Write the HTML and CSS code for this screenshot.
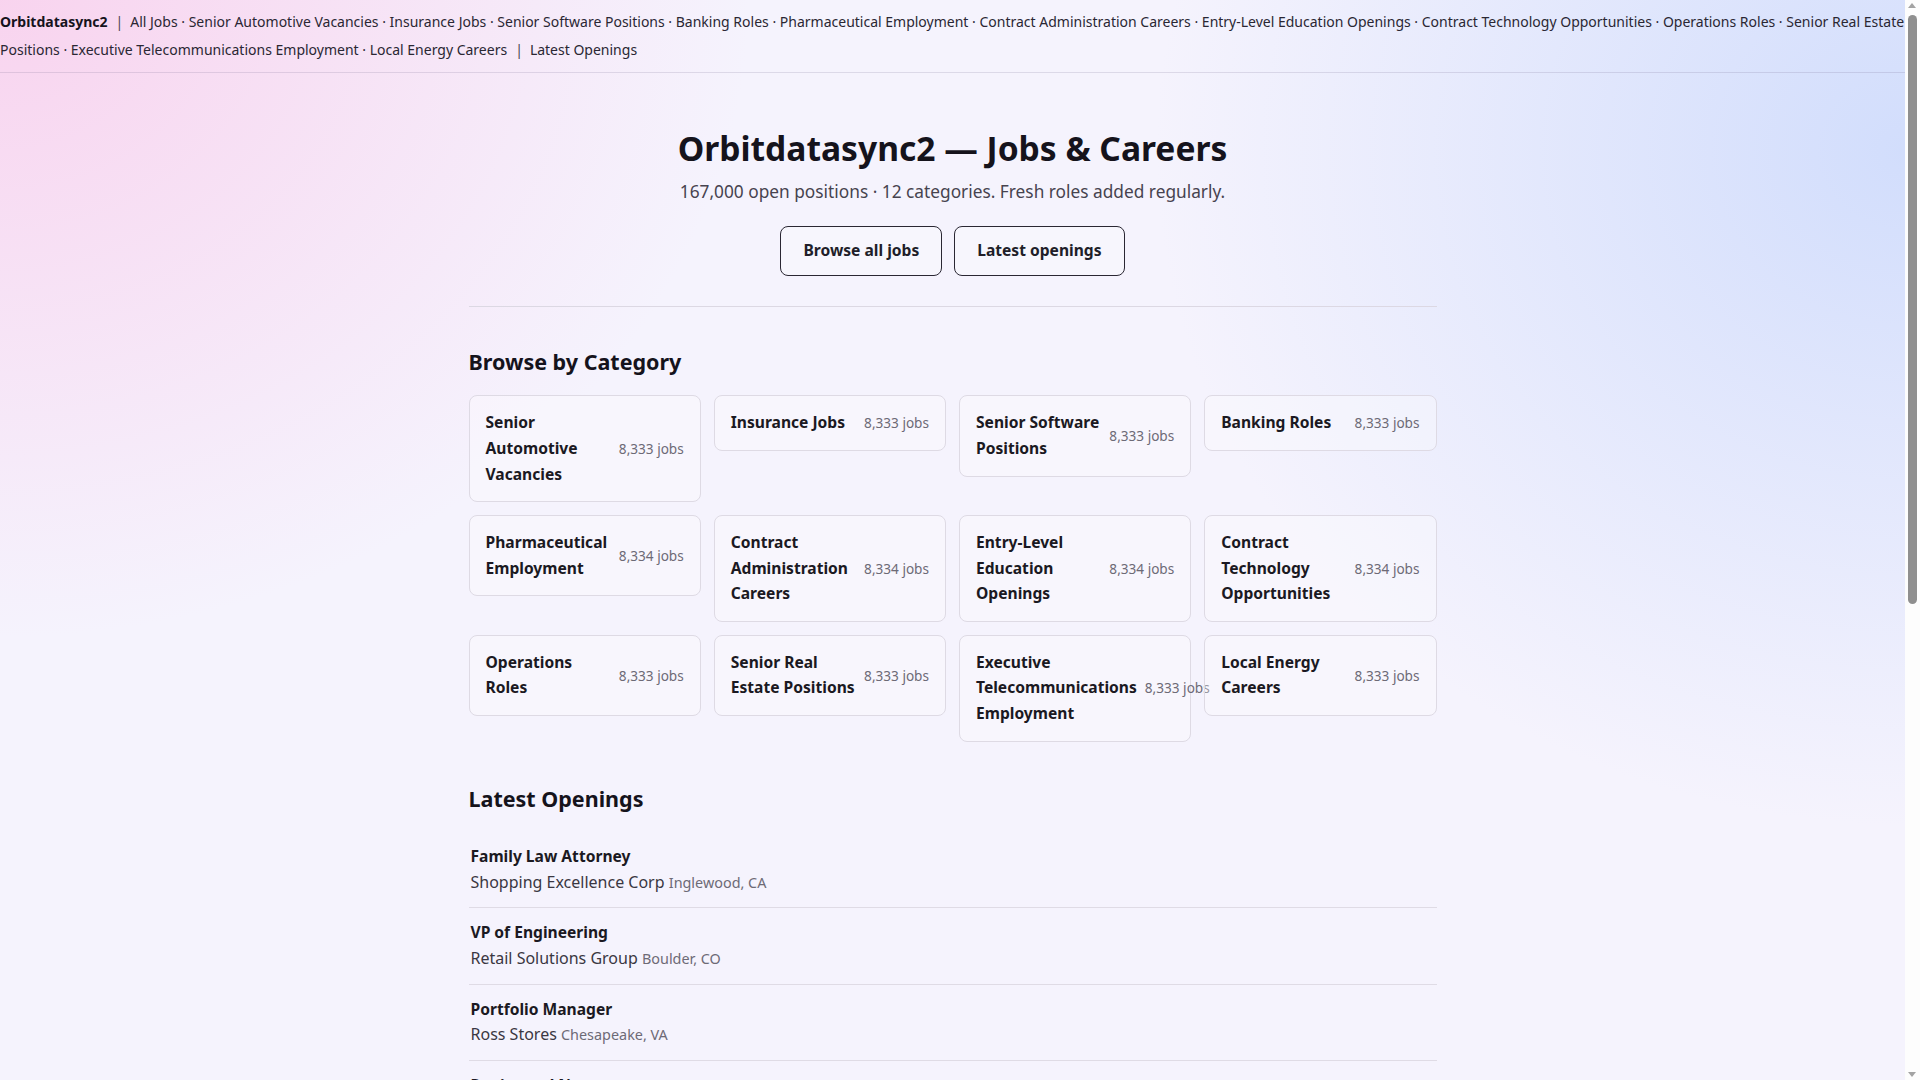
FILE: index.html
```html
<!DOCTYPE html>
<html lang="en">
<head>
<meta charset="utf-8">
<title>Orbitdatasync2 — Jobs &amp; Careers</title>
<link rel="stylesheet" href="styles.css">
</head>
<body>
<header class="topbar">
  <a class="brand" href="#">Orbitdatasync2</a><span class="bar">|</span><a href="#">All Jobs</a> · <a href="#">Senior Automotive Vacancies</a> · <a href="#">Insurance Jobs</a> · <a href="#">Senior Software Positions</a> · <a href="#">Banking Roles</a> · <a href="#">Pharmaceutical Employment</a> · <a href="#">Contract Administration Careers</a> · <a href="#">Entry-Level Education Openings</a> · <a href="#">Contract Technology Opportunities</a> · <a href="#">Operations Roles</a> · <a href="#">Senior Real Estate Positions</a> · <a href="#">Executive Telecommunications Employment</a> · <a href="#">Local Energy Careers</a><span class="bar">|</span><a href="#">Latest Openings</a>
</header>

<main class="wrap">
  <section class="hero">
    <h1>Orbitdatasync2 — Jobs &amp; Careers</h1>
    <p class="lead">167,000 open positions · 12 categories. Fresh roles added regularly.</p>
    <div class="actions">
      <a class="btn" href="#">Browse all jobs</a>
      <a class="btn" href="#">Latest openings</a>
    </div>
  </section>

  <section class="section">
    <h2>Browse by Category</h2>
    <div class="cats">
      <a class="cat" href="#"><span class="cat-name">Senior Automotive Vacancies</span><span class="cat-count">8,333 jobs</span></a>
      <a class="cat" href="#"><span class="cat-name">Insurance Jobs</span><span class="cat-count">8,333 jobs</span></a>
      <a class="cat" href="#"><span class="cat-name">Senior Software Positions</span><span class="cat-count">8,333 jobs</span></a>
      <a class="cat" href="#"><span class="cat-name">Banking Roles</span><span class="cat-count">8,333 jobs</span></a>
      <a class="cat" href="#"><span class="cat-name">Pharmaceutical Employment</span><span class="cat-count">8,334 jobs</span></a>
      <a class="cat" href="#"><span class="cat-name">Contract Administration Careers</span><span class="cat-count">8,334 jobs</span></a>
      <a class="cat" href="#"><span class="cat-name">Entry-Level Education Openings</span><span class="cat-count">8,334 jobs</span></a>
      <a class="cat" href="#"><span class="cat-name">Contract Technology Opportunities</span><span class="cat-count">8,334 jobs</span></a>
      <a class="cat" href="#"><span class="cat-name">Operations Roles</span><span class="cat-count">8,333 jobs</span></a>
      <a class="cat" href="#"><span class="cat-name">Senior Real Estate Positions</span><span class="cat-count">8,333 jobs</span></a>
      <a class="cat" href="#"><span class="cat-name">Executive Telecommunications Employment</span><span class="cat-count">8,333 jobs</span></a>
      <a class="cat" href="#"><span class="cat-name">Local Energy Careers</span><span class="cat-count">8,333 jobs</span></a>
    </div>
  </section>

  <section class="section latest">
    <h2>Latest Openings</h2>
    <ul class="jobs">
      <li class="job"><a class="job-title" href="#">Family Law Attorney</a><div class="job-meta"><span class="company">Shopping Excellence Corp</span> <span class="loc">Inglewood, CA</span></div></li>
      <li class="job"><a class="job-title" href="#">VP of Engineering</a><div class="job-meta"><span class="company">Retail Solutions Group</span> <span class="loc">Boulder, CO</span></div></li>
      <li class="job"><a class="job-title" href="#">Portfolio Manager</a><div class="job-meta"><span class="company">Ross Stores</span> <span class="loc">Chesapeake, VA</span></div></li>
      <li class="job"><a class="job-title" href="#">Registered Nurse</a><div class="job-meta"><span class="company">Summit Health Partners</span> <span class="loc">Tulsa, OK</span></div></li>
      <li class="job"><a class="job-title" href="#">Data Analyst</a><div class="job-meta"><span class="company">Northwind Analytics</span> <span class="loc">Raleigh, NC</span></div></li>
      <li class="job"><a class="job-title" href="#">Claims Adjuster</a><div class="job-meta"><span class="company">Harbor Mutual Insurance</span> <span class="loc">Tampa, FL</span></div></li>
      <li class="job"><a class="job-title" href="#">Senior Software Engineer</a><div class="job-meta"><span class="company">Cloudline Systems</span> <span class="loc">Austin, TX</span></div></li>
      <li class="job"><a class="job-title" href="#">Branch Manager</a><div class="job-meta"><span class="company">First Federal Bank</span> <span class="loc">Columbus, OH</span></div></li>
      <li class="job"><a class="job-title" href="#">Operations Coordinator</a><div class="job-meta"><span class="company">Evergreen Logistics</span> <span class="loc">Reno, NV</span></div></li>
      <li class="job"><a class="job-title" href="#">Elementary School Teacher</a><div class="job-meta"><span class="company">Bright Path Academy</span> <span class="loc">Mesa, AZ</span></div></li>
      <li class="job"><a class="job-title" href="#">Network Technician</a><div class="job-meta"><span class="company">Metro Telecom</span> <span class="loc">Omaha, NE</span></div></li>
      <li class="job"><a class="job-title" href="#">Energy Consultant</a><div class="job-meta"><span class="company">Solaris Power Co</span> <span class="loc">Fresno, CA</span></div></li>
    </ul>
  </section>

  <footer class="foot">© 2025 Orbitdatasync2 · All rights reserved</footer>
</main>

<div class="scrollbar" aria-hidden="true">
  <span class="sb-up"></span>
  <span class="sb-thumb"></span>
  <span class="sb-down"></span>
</div>
</body>
</html>
```

FILE: styles.css
```css
html {
  background-color: #f5f3fd;
}

body {
  margin: 0 15px 0 0;
  font-family: "Noto Sans", "Open Sans", sans-serif;
  font-size: 16px;
  line-height: 1.6;
  color: #17151f;
  background:
    radial-gradient(ellipse 1000px 850px at 0% 0%, rgba(249, 206, 236, 0.85), rgba(249, 206, 236, 0) 75%),
    radial-gradient(ellipse 1000px 900px at 100% 8%, rgba(206, 219, 252, 0.9), rgba(206, 219, 252, 0) 75%),
    #f5f3fd;
  background-repeat: no-repeat;
}

a {
  color: inherit;
  text-decoration: none;
}

/* top bar */
.topbar {
  font-size: 14px;
  line-height: 28px;
  padding: 7.5px 0 8.5px;
  color: #2a2733;
  border-bottom: 1px solid rgba(110, 100, 140, 0.18);
}

.brand {
  font-weight: 700;
  color: #15131c;
}

.bar {
  margin: 0 7px 0 8px;
  color: #4a4653;
}

/* main column */
.wrap {
  max-width: 1000px;
  margin: 0 auto;
  padding: 0 16px;
  box-sizing: border-box;
}

.hero {
  text-align: center;
  padding: 55px 0 30px;
  border-bottom: 1px solid #dcd8e3;
}

.hero h1 {
  margin: 0;
  font-size: 33.6px;
  line-height: 1.2;
  font-weight: 700;
  color: #15131c;
}

.lead {
  margin: 10px 0 0;
  font-size: 17.3px;
  line-height: 27px;
  color: #47434f;
}

.actions {
  margin-top: 21px;
  display: flex;
  justify-content: center;
  gap: 12px;
}

.btn {
  display: inline-block;
  padding: 11px 22px;
  border: 1px solid #2a2733;
  border-radius: 8px;
  font-weight: 700;
  font-size: 15.6px;
  line-height: 25.4px;
  color: #211e29;
  background: rgba(255, 255, 255, 0.25);
}

.section {
  padding-top: 41px;
}

.section.latest {
  padding-top: 43px;
}

.section h2 {
  margin: 0 0 19px;
  font-size: 21.5px;
  line-height: 28.6px;
  font-weight: 700;
  color: #15131c;
}

/* categories */
.cats {
  display: grid;
  grid-template-columns: repeat(4, minmax(0, 1fr));
  gap: 13px;
  align-items: start;
}

.cat {
  display: flex;
  align-items: center;
  justify-content: space-between;
  gap: 8px;
  padding: 14px 16px;
  border: 1px solid #dedae4;
  border-radius: 8px;
  background: rgba(255, 255, 255, 0.3);
}

.cat-name {
  font-weight: 700;
  font-size: 15.6px;
  line-height: 25.6px;
  color: #1b1922;
}

.cat-count {
  flex-shrink: 0;
  white-space: nowrap;
  font-size: 13.6px;
  color: #6d6a76;
}

/* job list */
.jobs {
  list-style: none;
  margin: 0;
  padding: 0;
}

.job {
  padding: 12px 2px;
  border-bottom: 1px solid #dfdbe5;
}

.job-title {
  display: block;
  font-weight: 700;
  font-size: 15.6px;
  line-height: 25.6px;
  color: #1b1922;
}

.company {
  color: #3a3742;
}

.loc {
  font-size: 14.4px;
  color: #6d6a76;
}

.foot {
  margin-top: 48px;
  padding: 24px 0 40px;
  text-align: center;
  font-size: 14px;
  color: #6d6a76;
}

/* browser-style vertical scrollbar drawn over the right edge */
.scrollbar {
  position: fixed;
  top: 0;
  right: 0;
  width: 15px;
  height: 100vh;
  background: #fdfdfd;
}

.sb-thumb {
  position: absolute;
  top: 15px;
  left: 3px;
  width: 9px;
  height: 589px;
  border-radius: 5px;
  background: #8f8f8f;
}

.sb-up,
.sb-down {
  position: absolute;
  left: 3px;
  width: 0;
  height: 0;
  border-left: 4.5px solid transparent;
  border-right: 4.5px solid transparent;
}

.sb-up {
  top: 3px;
  border-bottom: 5px solid #a3a3a3;
}

.sb-down {
  bottom: 3px;
  border-top: 5px solid #a3a3a3;
}
```
